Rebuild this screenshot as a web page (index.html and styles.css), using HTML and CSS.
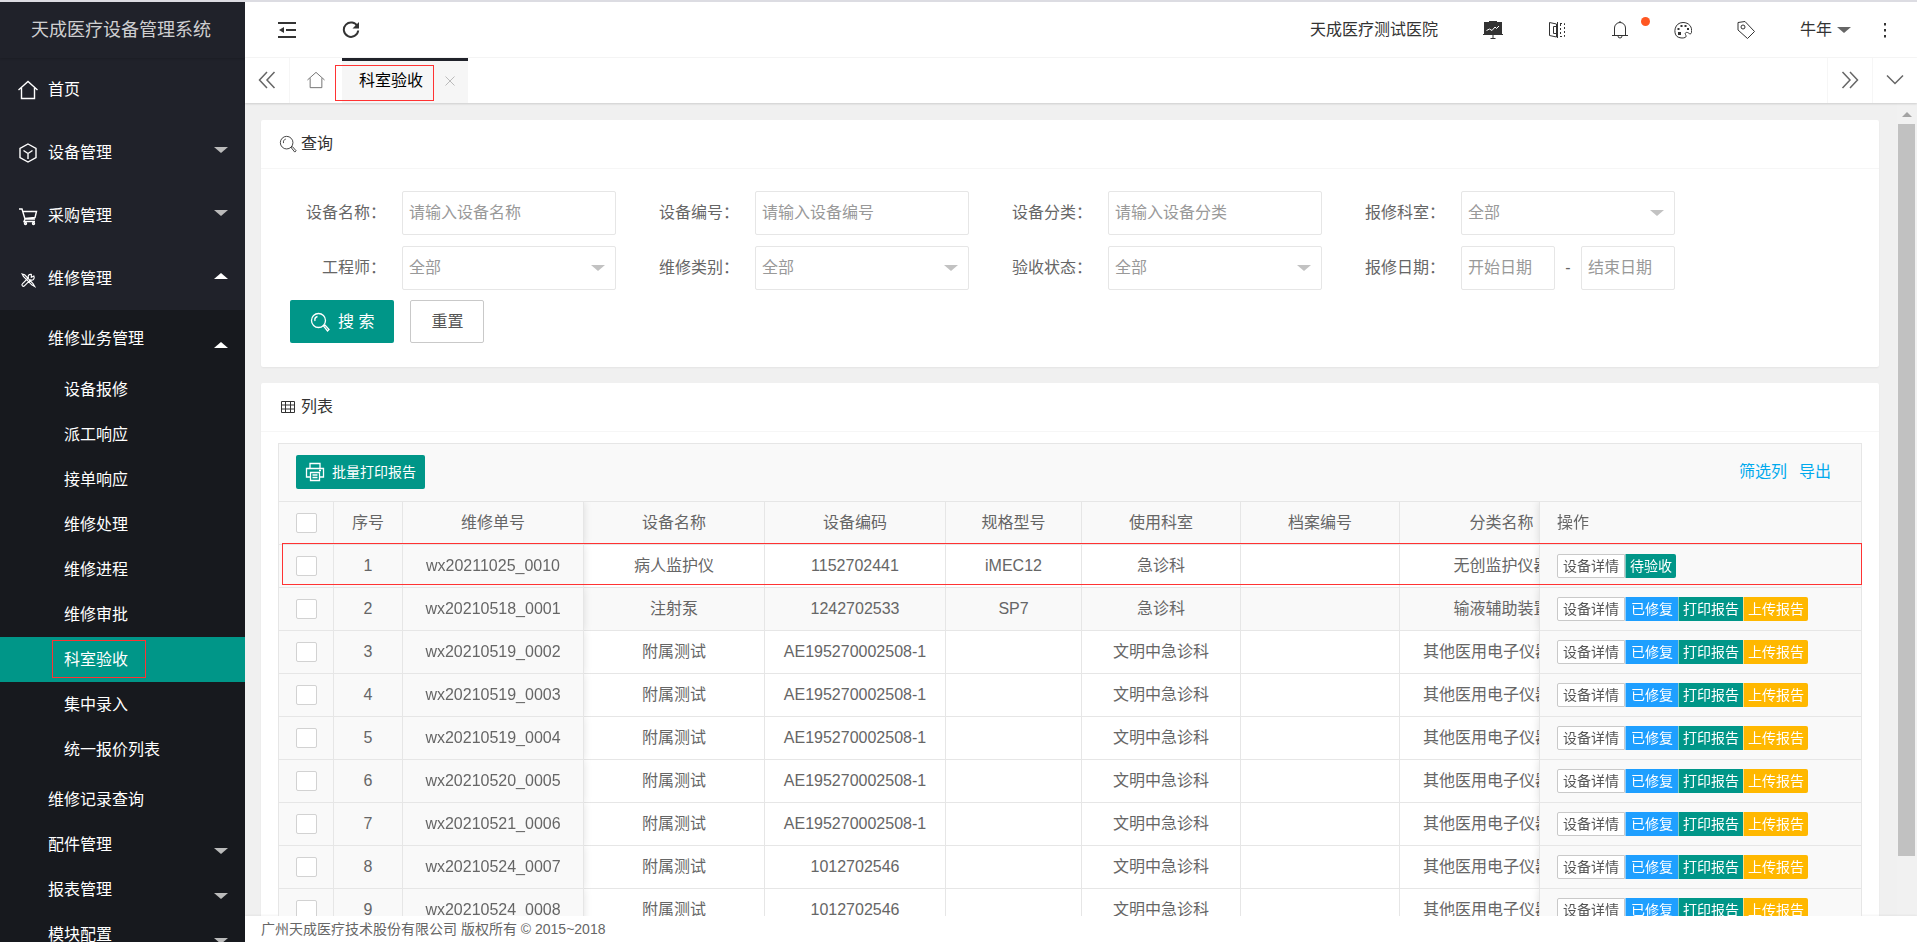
FILE: index.html
```html
<!DOCTYPE html>
<html lang="zh-CN">
  <head>
    <meta charset="utf-8">
    <title>天成医疗设备管理系统</title>
    <link rel="stylesheet" href="styles.css">
  </head>
  <body>
    <svg class="sprite" aria-hidden="true">
      <symbol id="i-home" viewBox="0 0 20 20"><path d="M.5 10 10 1.500 19.500 10M3.500 8v10.500h13V8"/></symbol>
      <symbol id="i-cube" viewBox="0 0 20 20"><path d="M10 1 18 5.500v9L10 19 2 14.500v-9zM5.500 7.500l4.500 3 4.500-3M10 10.500V16"/></symbol>
      <symbol id="i-cart" viewBox="0 0 20 20"><path d="M1 3h3l3 10h10M5 5.500h13.500l-1.500 6L7 12.500M7 13l-1 2.500h11"/><circle cx="7.500" cy="17.500" r="1"/><circle cx="15.500" cy="17.500" r="1"/></symbol>
      <symbol id="i-tools" viewBox="0 0 20 20"><path d="M3 3l3 1 10 10.500 2 3.500-3.500-2L4.500 6zM17 5.500l-3 1.500V3.500C11 3 9.500 5 10.500 7.500l-7 7c-2 2 .5 4.500 2.500 2.500l7-7c3 1 5.500-1 4-4.500z"/></symbol>
      <symbol id="i-search" viewBox="0 0 20 20"><circle cx="8.500" cy="8.500" r="7"/><path d="M5 9C4.500 7 5.500 5 7.500 4.500M13.500 14l1.500-1 4 4.500-1.500 1.500-4-5z"/></symbol>
      <symbol id="i-grid" viewBox="0 0 16 14"><path d="M1.500 1.500h13v11h-13zM1.500 5h13M1.500 9h13M5.500 1.500v11M10.500 1.500v11"/></symbol>
      <symbol id="i-print" viewBox="0 0 20 20"><path d="M5 6V1.500h10V6M5 15H1.500V6.500h17V15H15M5.500 10.500h9v8h-9zM7.500 13h5M7.500 15.500h5M14 8.500h2"/></symbol>
    </svg>

    <div class="layout">
      <aside class="side">
        <h1 class="logo">天成医疗设备管理系统</h1>
        <nav>
          <ul class="menu">
            <li><a href="#"><svg class="icon"><use href="#i-home"/></svg>首页</a></li>
            <li><a href="#"><svg class="icon"><use href="#i-cube"/></svg>设备管理<i class="caret"></i></a></li>
            <li><a href="#"><svg class="icon"><use href="#i-cart"/></svg>采购管理<i class="caret"></i></a></li>
            <li>
              <a href="#"><svg class="icon icon-tools" viewBox="-2 -3 24 24"><use href="#i-tools" width="20" height="20"/></svg>维修管理<i class="caret up"></i></a>
              <ul class="submenu">
                <li class="group">
                  <a href="#">维修业务管理<i class="caret up"></i></a>
                  <ul class="leafs">
                    <li><a href="#">设备报修</a></li>
                    <li><a href="#">派工响应</a></li>
                    <li><a href="#">接单响应</a></li>
                    <li><a href="#">维修处理</a></li>
                    <li><a href="#">维修进程</a></li>
                    <li><a href="#">维修审批</a></li>
                    <li class="this"><a href="#">科室验收</a><span class="mark"></span></li>
                    <li><a href="#">集中录入</a></li>
                    <li><a href="#">统一报价列表</a></li>
                  </ul>
                </li>
                <li><a href="#">维修记录查询</a></li>
                <li><a href="#">配件管理<i class="caret"></i></a></li>
                <li><a href="#">报表管理<i class="caret"></i></a></li>
                <li><a href="#">模块配置<i class="caret"></i></a></li>
              </ul>
            </li>
          </ul>
        </nav>
      </aside>

      <div class="main">
        <header class="header">
          <a href="#" title="侧边伸缩"><svg class="icon" viewBox="0 0 18 18"><path class="bold" d="M0 2h18M8 9h10M0 16h18"/><path class="fill" d="M1 9l5-3v6z"/></svg></a>
          <a href="#" title="刷新"><svg class="icon" viewBox="0 0 18 18"><path class="bold" d="M15.500 5.500A7.200 7.200 0 1 0 16.200 9.500"/><path class="fill" d="M17 1v6.500h-6.500z"/></svg></a>
          <div class="header-right">
            <a class="hospital" href="#">天成医疗测试医院</a>
            <a href="#" title="大屏"><svg class="icon icon-board" viewBox="0 0 20 18"><path class="fill" d="M6 0h8v1h5v12h1v1H0v-1h1V1h5z"/><path d="M10 13v4M7.500 17.500h5"/><path class="line" d="M3.500 9.500l3-1.500 2.500 1.500 3-3.500 1.500 1.500L16 5"/></svg></a>
            <a href="#" title="科室"><svg class="icon" viewBox="0 0 18 18"><path d="M1.500 1.500 8.500 3v13l-7-1.500zM8.500 5.500H5.500v7h3M9.500 1V17"/><path class="dash" d="M12 2.500h4.500v13H12M12.500 3v12"/></svg></a>
            <a class="bell" href="#" title="消息"><svg class="icon" viewBox="0 0 18 18"><path d="M1 14.500h16M3.500 14.500V7a5.500 5.500 0 0 1 11 0v7.500M7 15a2 2 0 0 0 4 0M9 0v1.500"/></svg><span class="dot"></span></a>
            <a href="#" title="主题"><svg class="icon" viewBox="0 0 18 18"><path d="M3 15.500C-1 12 .5 1.500 9 1.500c6 0 9.500 4.500 8.500 10-.5 2-2 1.500-3 .5-2-1.500-4 0-3 1.500.8 1.500.8 2.500-.5 3-2 1-6 .5-8-1z"/><path class="fill" d="M4 11h3v3H4zM3.500 7h2v2h-2zM6.500 4h2v2h-2zM10.500 4h2v2h-2zM13 7h2v2h-2z"/></svg></a>
            <a href="#" title="便签"><svg class="icon" viewBox="0 0 18 18"><path d="M1 1.500 8 .5l9.500 10-7 7L1 9z"/><circle cx="6" cy="6" r="2"/></svg></a>
            <a class="user" href="#">牛年<i class="caret"></i></a>
            <a class="more" href="#" title="更多"><svg class="icon" viewBox="0 0 18 18"><path class="fill" d="M8 2h2v2.500H8zM8 8h2v2.500H8zM8 14h2v2.500H8z"/></svg></a>
          </div>
        </header>

        <div class="tabs">
          <a class="tab-ctrl tab-prev" href="#" title="左移"><svg class="icon" viewBox="0 0 18 18"><path d="M9 1 1.500 9 9 17M16.500 1 9 9l7.500 8"/></svg></a>
          <a class="tab-home" href="#" title="首页"><svg class="icon"><use href="#i-home"/></svg></a>
          <div class="tab this"><a href="#">科室验收</a><button class="tab-close" type="button" title="关闭"><svg viewBox="0 0 10 10"><path d="M.5.5l9 9M9.500.5l-9 9"/></svg></button><span class="mark"></span></div>
          <a class="tab-ctrl tab-next" href="#" title="右移"><svg class="icon" viewBox="0 0 18 18"><path d="M1.500 1 9 9l-7.500 8M9 1l7.500 8L9 17"/></svg></a>
          <a class="tab-ctrl" href="#" title="标签操作"><svg class="icon" viewBox="0 0 18 18"><path d="M1 4.500l8 8 8-8"/></svg></a>
        </div>

        <div class="body">
          <main class="content">
            <section class="card">
              <h2 class="card-header"><svg class="icon"><use href="#i-search"/></svg>查询</h2>
              <form class="query">
                <div class="fields">
                  <div class="field"><label for="name">设备名称：</label><input id="name" type="text" placeholder="请输入设备名称"></div>
                  <div class="field"><label for="code">设备编号：</label><input id="code" type="text" placeholder="请输入设备编号"></div>
                  <div class="field"><label for="type">设备分类：</label><input id="type" type="text" placeholder="请输入设备分类"></div>
                  <div class="field"><label for="dept">报修科室：</label><div class="select"><select id="dept"><option>全部</option></select></div></div>
                  <div class="field"><label for="engineer">工程师：</label><div class="select"><select id="engineer"><option>全部</option></select></div></div>
                  <div class="field"><label for="kind">维修类别：</label><div class="select"><select id="kind"><option>全部</option></select></div></div>
                  <div class="field"><label for="state">验收状态：</label><div class="select"><select id="state"><option>全部</option></select></div></div>
                  <div class="field"><label for="start">报修日期：</label><div class="range"><input id="start" type="text" placeholder="开始日期"><span>-</span><input type="text" placeholder="结束日期" aria-label="结束日期"></div></div>
                </div>
                <div class="actions">
                  <button class="btn btn-main" type="button"><svg class="icon"><use href="#i-search"/></svg>搜 索</button>
                  <button class="btn btn-plain" type="reset">重置</button>
                </div>
              </form>
            </section>

            <section class="card">
              <h2 class="card-header"><svg class="icon icon-grid"><use href="#i-grid"/></svg>列表</h2>
              <div class="table-box">
                <div class="toolbar">
                  <button class="btn btn-main btn-print" type="button"><svg class="icon"><use href="#i-print"/></svg>批量打印报告</button>
                  <div class="links"><a href="#">筛选列</a><a href="#">导出</a></div>
                </div>
                <div class="table-view">
                  <table>
                    <colgroup>
                      <col class="w-check"><col class="w-no"><col class="w-wide"><col class="w-wide"><col class="w-wide"><col class="w-model"><col class="w-mid"><col class="w-mid"><col class="w-cat"><col class="w-ops">
                    </colgroup>
                    <thead>
                      <tr><th><input type="checkbox" aria-label="全选"></th><th>序号</th><th class="fix-left">维修单号</th><th>设备名称</th><th>设备编码</th><th>规格型号</th><th>使用科室</th><th>档案编号</th><th>分类名称</th><th class="ops">操作</th></tr>
                    </thead>
                    <tbody>
                      <tr><td><input type="checkbox" aria-label="选择1"></td><td>1</td><td class="fix-left">wx20211025_0010</td><td>病人监护仪</td><td>1152702441</td><td>iMEC12</td><td>急诊科</td><td></td><td>无创监护仪器</td><td class="ops"><div class="btns"><button class="plain">设备详情</button><button class="green">待验收</button></div></td></tr>
                      <tr><td><input type="checkbox" aria-label="选择2"></td><td>2</td><td class="fix-left">wx20210518_0001</td><td>注射泵</td><td>1242702533</td><td>SP7</td><td>急诊科</td><td></td><td>输液辅助装置</td><td class="ops"><div class="btns"><button class="plain">设备详情</button><button class="blue">已修复</button><button class="green">打印报告</button><button class="yellow">上传报告</button></div></td></tr>
                      <tr><td><input type="checkbox" aria-label="选择3"></td><td>3</td><td class="fix-left">wx20210519_0002</td><td>附属测试</td><td>AE195270002508-1</td><td></td><td>文明中急诊科</td><td></td><td class="long">其他医用电子仪器</td><td class="ops"><div class="btns"><button class="plain">设备详情</button><button class="blue">已修复</button><button class="green">打印报告</button><button class="yellow">上传报告</button></div></td></tr>
                      <tr><td><input type="checkbox" aria-label="选择4"></td><td>4</td><td class="fix-left">wx20210519_0003</td><td>附属测试</td><td>AE195270002508-1</td><td></td><td>文明中急诊科</td><td></td><td class="long">其他医用电子仪器</td><td class="ops"><div class="btns"><button class="plain">设备详情</button><button class="blue">已修复</button><button class="green">打印报告</button><button class="yellow">上传报告</button></div></td></tr>
                      <tr><td><input type="checkbox" aria-label="选择5"></td><td>5</td><td class="fix-left">wx20210519_0004</td><td>附属测试</td><td>AE195270002508-1</td><td></td><td>文明中急诊科</td><td></td><td class="long">其他医用电子仪器</td><td class="ops"><div class="btns"><button class="plain">设备详情</button><button class="blue">已修复</button><button class="green">打印报告</button><button class="yellow">上传报告</button></div></td></tr>
                      <tr><td><input type="checkbox" aria-label="选择6"></td><td>6</td><td class="fix-left">wx20210520_0005</td><td>附属测试</td><td>AE195270002508-1</td><td></td><td>文明中急诊科</td><td></td><td class="long">其他医用电子仪器</td><td class="ops"><div class="btns"><button class="plain">设备详情</button><button class="blue">已修复</button><button class="green">打印报告</button><button class="yellow">上传报告</button></div></td></tr>
                      <tr><td><input type="checkbox" aria-label="选择7"></td><td>7</td><td class="fix-left">wx20210521_0006</td><td>附属测试</td><td>AE195270002508-1</td><td></td><td>文明中急诊科</td><td></td><td class="long">其他医用电子仪器</td><td class="ops"><div class="btns"><button class="plain">设备详情</button><button class="blue">已修复</button><button class="green">打印报告</button><button class="yellow">上传报告</button></div></td></tr>
                      <tr><td><input type="checkbox" aria-label="选择8"></td><td>8</td><td class="fix-left">wx20210524_0007</td><td>附属测试</td><td>1012702546</td><td></td><td>文明中急诊科</td><td></td><td class="long">其他医用电子仪器</td><td class="ops"><div class="btns"><button class="plain">设备详情</button><button class="blue">已修复</button><button class="green">打印报告</button><button class="yellow">上传报告</button></div></td></tr>
                      <tr><td><input type="checkbox" aria-label="选择9"></td><td>9</td><td class="fix-left">wx20210524_0008</td><td>附属测试</td><td>1012702546</td><td></td><td>文明中急诊科</td><td></td><td class="long">其他医用电子仪器</td><td class="ops"><div class="btns"><button class="plain">设备详情</button><button class="blue">已修复</button><button class="green">打印报告</button><button class="yellow">上传报告</button></div></td></tr>
                    </tbody>
                  </table>
                </div>
                <span class="mark"></span>
              </div>
            </section>
          </main>
          <div class="scrollbar"><span class="arrow"></span><span class="thumb"></span></div>
        </div>

        <footer class="footer">广州天成医疗技术股份有限公司 版权所有 © 2015~2018</footer>
      </div>
    </div>
  </body>
</html>
```
FILE: styles.css
```css
* {
  box-sizing: border-box;
}
body {
  margin: 0;
  font: 16px/24px "Liberation Sans", "Noto Sans CJK SC", sans-serif;
  color: #666;
  background: #f0f0f0;
}
a {
  color: inherit;
  text-decoration: none;
}
ul {
  margin: 0;
  padding: 0;
  list-style: none;
}
h1, h2 {
  margin: 0;
  font-weight: normal;
}
input, select, button {
  font: inherit;
}
.sprite {
  display: none;
}
.icon {
  width: 18px;
  height: 18px;
  flex: none;
  fill: none;
  stroke: currentColor;
}
.icon .fill {
  fill: currentColor;
  stroke: none;
}
.icon .bold {
  stroke-width: 2;
}
.icon .line {
  stroke: #fff;
}
.icon .dash {
  stroke-dasharray: 2 2;
}
.caret {
  border: 7px solid transparent;
  border-top: 6px solid currentColor;
  border-bottom: 0;
}
.caret.up {
  border-top: 0;
  border-bottom: 6px solid #fff;
}
/* red frames round the highlighted spots */
.mark {
  position: absolute;
  border: 1px solid #f33;
  pointer-events: none;
}

.layout {
  display: flex;
  height: 100vh;
  border-top: 2px solid #dcdce2;
  overflow: hidden;
}

/* side menu */
.side {
  flex: none;
  width: 245px;
  background: #20222a;
  color: #fff;
  overflow: hidden;
}
.logo {
  height: 56px;
  padding-right: 3px;
  font-size: 18px;
  line-height: 56px;
  text-align: center;
  color: rgba(255, 255, 255, .8);
  box-shadow: 0 1px 2px rgba(0, 0, 0, .15);
}
.menu a {
  display: flex;
  align-items: center;
}
.menu > li > a {
  height: 63px;
  padding: 0 17px 0 18px;
}
.menu .icon {
  width: 20px;
  height: 20px;
  margin-right: 10px;
  stroke-width: 1.4;
}
.menu .caret {
  margin-left: auto;
  margin-bottom: 6px;
  color: #bbb;
}
.submenu {
  background: #17191e;
}
.submenu a {
  height: 45px;
  padding: 0 17px 0 48px;
}
.submenu .caret {
  margin-top: 12px;
  margin-bottom: 0;
}
.group {
  padding: 6px 0 5px;
}
.leafs {
  margin-top: 6px;
}
.leafs a {
  padding-left: 64px;
}
.leafs .this {
  position: relative;
  background: #009688;
}
.leafs .mark {
  top: 3px;
  left: 52px;
  width: 94px;
  height: 38px;
}

/* top bar */
.main {
  flex: 1;
  min-width: 0;
  display: flex;
  flex-direction: column;
}
.header {
  flex: none;
  display: flex;
  align-items: center;
  height: 56px;
  padding-left: 33px;
  gap: 46px;
  background: #fff;
  border-bottom: 1px solid #f6f6f6;
  color: #333;
}
.header a {
  display: flex;
  align-items: center;
}
.header-right {
  display: flex;
  align-items: center;
  margin-left: auto;
  padding-right: 23px;
  gap: 45px;
}
.header .icon-board {
  width: 20px;
}
.bell {
  position: relative;
}
.dot {
  position: absolute;
  top: -4px;
  left: 30px;
  width: 9px;
  height: 9px;
  border-radius: 50%;
  background: #ff5722;
}
.user {
  gap: 5px;
}
.user .caret {
  color: #666;
}
.more {
  margin-left: -20px;
}
.tabs {
  flex: none;
  position: relative;
  z-index: 1;
  display: flex;
  height: 45px;
  background: #fff;
  box-shadow: 0 1px 2px rgba(0, 0, 0, .15);
}
.tabs > a {
  display: flex;
  align-items: center;
  justify-content: center;
  padding-bottom: 2px;
}
.tab-ctrl {
  width: 45px;
  border-left: 1px solid #f6f6f6;
}
.tab-ctrl .icon {
  stroke-width: 1.5;
}
.tab-prev {
  border-left: 0;
  border-right: 1px solid #f6f6f6;
}
.tab-home {
  width: 52px;
}
.tab-next {
  margin-left: auto;
}
.tab {
  position: relative;
  display: flex;
  align-items: center;
  gap: 17px;
  padding: 0 8px 2px 17px;
  border-top: 3px solid #20222a;
  background: #f6f6f6;
  color: #000;
}
.tab-close {
  padding: 5px;
  border: 0;
  background: none;
  line-height: 0;
}
.tab-close svg {
  width: 10px;
  height: 10px;
  stroke: #bbb;
}
.tab .mark {
  top: 4px;
  left: -7px;
  width: 99px;
  height: 36px;
}

/* content */
.body {
  flex: 1;
  min-height: 0;
  display: flex;
}
.content {
  flex: 1;
  min-width: 0;
  padding: 17px 18px 0 16px;
  overflow: hidden;
}
.card {
  margin-bottom: 16px;
  border-radius: 2px;
  background: #fff;
  box-shadow: 0 1px 2px rgba(0, 0, 0, .05);
}
.card-header {
  display: flex;
  align-items: center;
  gap: 4px;
  height: 49px;
  padding: 0 18px 1px;
  border-bottom: 1px solid #f6f6f6;
  font-size: 16px;
  color: #333;
}
.icon-grid {
  height: 14px;
}
.query {
  padding: 22px 17px 24px;
}
.fields {
  display: flex;
  flex-wrap: wrap;
  gap: 11px 15px;
}
.field {
  display: flex;
  align-items: center;
  width: 338px;
  height: 44px;
}
.field label {
  flex: 1;
  padding-right: 16px;
  text-align: right;
  white-space: nowrap;
}
.field input,
.field select {
  width: 214px;
  height: 44px;
  padding: 0 6px;
  border: 1px solid #e6e6e6;
  border-radius: 2px;
  background: #fff;
  color: #999;
}
.field input::placeholder {
  color: #999;
}
.field select {
  appearance: none;
}
.select {
  position: relative;
}
.select::after {
  content: "";
  position: absolute;
  top: 19px;
  right: 11px;
  border: 7px solid transparent;
  border-top: 6px solid #c2c2c2;
  border-bottom: 0;
  pointer-events: none;
}
.range {
  display: flex;
  align-items: center;
  justify-content: space-between;
  width: 214px;
}
.field .range input {
  width: 94px;
}
.actions {
  display: flex;
  gap: 16px;
  padding: 10px 12px 0;
}
.btn {
  display: flex;
  align-items: center;
  justify-content: center;
  height: 43px;
  padding: 0 20px;
  border: 0;
  border-radius: 2px;
}
.btn-main {
  gap: 8px;
  background: #009688;
  color: #fff;
}
.btn .icon {
  width: 20px;
  height: 20px;
  stroke-width: 1.3;
}
.btn-plain {
  border: 1px solid #c9c9c9;
  background: #fff;
  color: #555;
}

/* list */
.table-box {
  position: relative;
  margin: 11px 17px 16px;
  border: 1px solid #e6e6e6;
}
.toolbar {
  display: flex;
  align-items: center;
  justify-content: space-between;
  height: 58px;
  padding: 0 30px 2px 17px;
  border-bottom: 1px solid #e6e6e6;
  background: #f9f9f9;
}
.btn-print {
  height: 34px;
  padding: 0 9px;
  gap: 7px;
  font-size: 14px;
}
.links {
  display: flex;
  gap: 12px;
  color: #01aaed;
}
.table-view {
  overflow: hidden;
}
table {
  width: 1647px;
  table-layout: fixed;
  border-spacing: 0;
}
.w-check {
  width: 55px;
}
.w-no {
  width: 69px;
}
.w-wide {
  width: 181px;
}
.w-model {
  width: 136px;
}
.w-mid {
  width: 159px;
}
.w-cat {
  width: 204px;
}
.w-ops {
  width: 322px;
}
th, td {
  height: 43px;
  padding: 0;
  border-right: 1px solid #e6e6e6;
  border-bottom: 1px solid #e6e6e6;
  font-weight: normal;
  text-align: center;
  white-space: nowrap;
}
th,
tr:nth-child(even) td,
td:nth-child(-n+3),
td.ops {
  background: #f9f9f9;
}
tbody tr:nth-child(n+3) td:nth-child(n+4):not(.ops) {
  background: #fff;
}
.fix-left {
  position: relative;
  box-shadow: 0 0 8px rgba(0, 0, 0, .12);
  clip-path: inset(0 -10px 0 0);
}
.long {
  padding-left: 23px;
  text-align: left;
}
.ops {
  position: sticky;
  right: 0;
  padding-left: 17px;
  border-left: 1px solid #e6e6e6;
  border-right: 0;
  text-align: left;
  box-shadow: 0 0 8px rgba(0, 0, 0, .12);
  clip-path: inset(0 0 0 -10px);
}
td input, th input {
  display: block;
  appearance: none;
  width: 21px;
  height: 20px;
  margin: 0 auto;
  border: 1px solid #d2d2d2;
  border-radius: 2px;
  background: #fff;
}
.btns {
  display: flex;
}
.btns button {
  height: 24px;
  padding: 0 4px;
  border: 0;
  border-left: 1px solid rgba(255, 255, 255, .5);
  font-size: 14px;
  line-height: 22px;
  color: #fff;
}
.btns button:first-child {
  border-radius: 2px 0 0 2px;
}
.btns button:last-child {
  border-radius: 0 2px 2px 0;
}
.btns .plain {
  padding: 0 5px;
  border: 1px solid #c9c9c9;
  background: #fff;
  color: #555;
}
.btns .green {
  background: #009688;
}
.btns .blue {
  padding: 0 5px;
  background: #1e9fff;
}
.btns .yellow {
  background: #ffb800;
}
.table-box .mark {
  top: 99px;
  left: 3px;
  right: -1px;
  height: 42px;
}

/* scroll bar of the content frame */
.scrollbar {
  flex: none;
  width: 20px;
  padding: 9px 2px 0 1px;
  background: #f1f1f1;
}
.scrollbar .arrow {
  display: block;
  width: 10px;
  margin: 0 auto 7px;
  border: 5px solid transparent;
  border-top: 0;
  border-bottom: 5px solid #a3a3a3;
}
.scrollbar .thumb {
  display: block;
  height: 91%;
  background: #c1c1c1;
}
.footer {
  flex: none;
  height: 26px;
  padding: 0 16px;
  background: #fff;
  font-size: 14px;
  line-height: 26px;
  box-shadow: 0 -1px 2px rgba(0, 0, 0, .05);
}
```
